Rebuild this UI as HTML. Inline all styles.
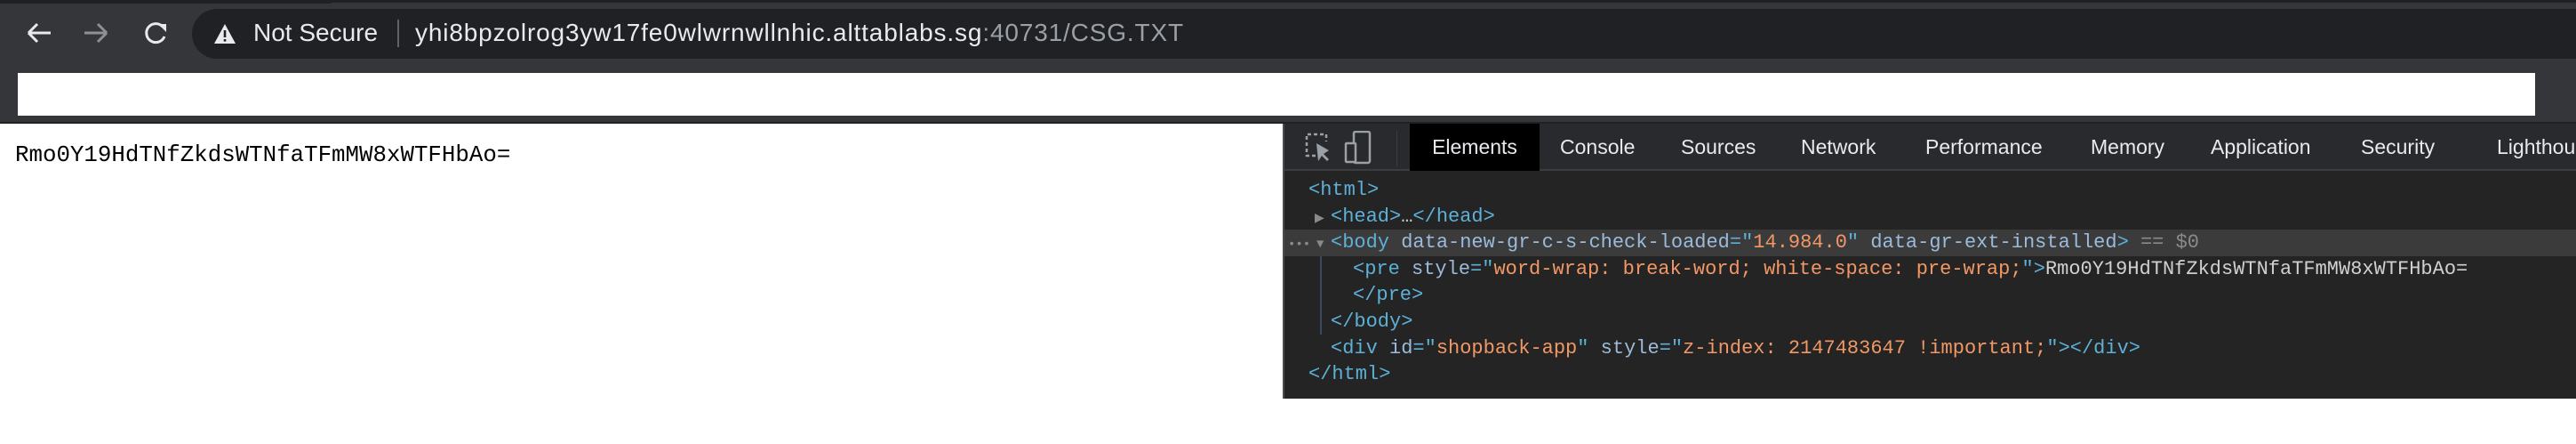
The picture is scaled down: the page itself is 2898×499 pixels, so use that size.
<!DOCTYPE html>
<html><head><meta charset="utf-8"><style>
*{margin:0;padding:0;box-sizing:border-box}
body{width:2898px;height:448px;overflow:hidden;background:#fff;position:relative;font-family:"Liberation Sans",sans-serif}
.tb{position:absolute;left:0;top:0;width:2898px;height:137px;background:#35363a}
.strip{position:absolute;left:0;top:0;width:2898px;height:3px;background:#202124}
.pill{position:absolute;left:216px;top:10px;width:2720px;height:56px;border-radius:28px;background:#202124}
.ns{position:absolute;left:285px;top:18px;font-size:28px;color:#e8eaed;line-height:38px}
.url{position:absolute;left:467px;top:18px;font-size:28px;color:#e8eaed;line-height:38px;letter-spacing:0.85px}
.url span{color:#9aa0a6}
.div{position:absolute;left:447px;top:22px;width:2px;height:31px;background:#5f6368}
.wb{position:absolute;left:20px;top:82px;width:2832px;height:48px;background:#fff}
.line{position:absolute;left:0;top:137px;width:2898px;height:2px;background:#202124}
.txt{position:absolute;left:17px;top:160px;font-family:"Liberation Mono",monospace;font-size:25.8px;color:#000}
.dt{position:absolute;left:1443px;top:139px;width:1455px;height:309px;background:#242424;border-left:2px solid #494c50}
.dtb{position:absolute;left:0;top:0;width:100%;height:53px;background:#292a2d;border-bottom:2px solid #3d3d3d}
.tab{position:absolute;top:0;height:53px;line-height:53px;font-size:23px;color:#e8eaed}
.tab.a{background:#000}
.code{position:absolute;left:0;top:60px;font-family:"Liberation Mono",monospace;font-size:22px;color:#cfd0d0;white-space:pre}
.l{position:absolute;height:30px;line-height:30px;white-space:pre}
.t{color:#5db0d7}.n{color:#9bbbdc}.v{color:#f29766}.g{color:#8a8a8a}
</style></head><body>
<div class="tb">
<div class="strip"></div>
<div style="position:absolute;left:0;top:0;width:375px;height:4px;background:#202124;border-radius:0 0 10px 0"></div>
<svg style="position:absolute;left:28px;top:24px" width="170" height="30" viewBox="0 0 170 30">
<path d="M4 13H29M4 13L14 3M4 13L14 23" stroke="#e8eaed" stroke-width="3" fill="none"/>
<path d="M67 13H92M92 13L82 3M92 13L82 23" stroke="#8e9094" stroke-width="3" fill="none"/>
<path d="M155 6A10.5 10.5 0 1 0 157 17" stroke="#e8eaed" stroke-width="3" fill="none"/>
<path d="M150 3L159 3L159 12Z" fill="#e8eaed"/>
</svg>
<div class="pill"></div>
<svg style="position:absolute;left:240px;top:26px" width="26" height="24" viewBox="0 0 26 24"><path d="M13 1L25 23H1Z" fill="#e8eaed"/><rect x="11.7" y="8" width="2.6" height="8" fill="#202124"/><rect x="11.7" y="18" width="2.6" height="2.6" fill="#202124"/></svg>
<div class="ns">Not Secure</div>
<div class="div"></div>
<div class="url">yhi8bpzolrog3yw17fe0wlwrnwllnhic.alttablabs.sg<span>:40731/CSG.TXT</span></div>
<div class="wb"></div>
</div>
<div class="line"></div>
<div class="txt">Rmo0Y19HdTNfZkdsWTNfaTFmMW8xWTFHbAo=</div>
<div class="dt">
<div class="dtb">
<svg style="position:absolute;left:21px;top:8px" width="90" height="40" viewBox="0 0 90 40">
<path d="M14 28H4V4H26V12" stroke="#9aa0a6" stroke-width="2.5" fill="none" stroke-dasharray="4 3"/>
<path d="M15 14L17 34L21 28L27 34L29 32L23 26L29 22Z" fill="#9aa0a6"/>
<rect x="57" y="1" width="18" height="35" rx="2" stroke="#9aa0a6" stroke-width="2.5" fill="none"/>
<rect x="48" y="14" width="11" height="21" rx="1" stroke="#9aa0a6" stroke-width="2.5" fill="#292a2d"/>
</svg>
<div style="position:absolute;left:126px;top:8px;width:1px;height:40px;background:#3d3d3d"></div>
<div class="tab a" style="left:141px;width:146px;text-align:center">Elements</div>
<div class="tab" style="left:310px">Console</div>
<div class="tab" style="left:446px">Sources</div>
<div class="tab" style="left:581px">Network</div>
<div class="tab" style="left:721px">Performance</div>
<div class="tab" style="left:907px">Memory</div>
<div class="tab" style="left:1042px">Application</div>
<div class="tab" style="left:1211px">Security</div>
<div class="tab" style="left:1364px">Lighthouse</div>
</div>
<div style="position:absolute;left:0;top:119px;width:100%;height:30px;background:#3b3b3b"></div>
<div style="position:absolute;left:40px;top:149px;width:2px;height:88px;background:#3b4a5e"></div>
<div class="code" style="top:60px;left:0">
<div class="l" style="left:27px;top:0"><span class="t">&lt;html&gt;</span></div>
<div class="l" style="left:34px;top:30px"><span class="g" style="font-size:14px">&#9654;</span></div>
<div class="l" style="left:52px;top:30px"><span class="t">&lt;head&gt;</span>…<span class="t">&lt;/head&gt;</span></div>
<div class="l" style="left:4px;top:59px"><span class="g" style="font-size:14px">•••</span></div>
<div class="l" style="left:36px;top:59px"><span class="g" style="font-size:14px">&#9660;</span></div>
<div class="l" style="left:52px;top:59px"><span class="t">&lt;body</span> <span class="n">data-new-gr-c-s-check-loaded</span><span class="t">="</span><span class="v">14.984.0</span><span class="t">"</span> <span class="n">data-gr-ext-installed</span><span class="t">&gt;</span> <span class="g">== $0</span></div>
<div class="l" style="left:77px;top:89px"><span class="t">&lt;pre</span> <span class="n">style</span><span class="t">="</span><span class="v">word-wrap: break-word; white-space: pre-wrap;</span><span class="t">"&gt;</span>Rmo0Y19HdTNfZkdsWTNfaTFmMW8xWTFHbAo=</div>
<div class="l" style="left:77px;top:118px"><span class="t">&lt;/pre&gt;</span></div>
<div class="l" style="left:52px;top:148px"><span class="t">&lt;/body&gt;</span></div>
<div class="l" style="left:52px;top:178px"><span class="t">&lt;div</span> <span class="n">id</span><span class="t">="</span><span class="v">shopback-app</span><span class="t">"</span> <span class="n">style</span><span class="t">="</span><span class="v">z-index: 2147483647 !important;</span><span class="t">"&gt;&lt;/div&gt;</span></div>
<div class="l" style="left:27px;top:207px"><span class="t">&lt;/html&gt;</span></div>
</div>
</div>
</body></html>
